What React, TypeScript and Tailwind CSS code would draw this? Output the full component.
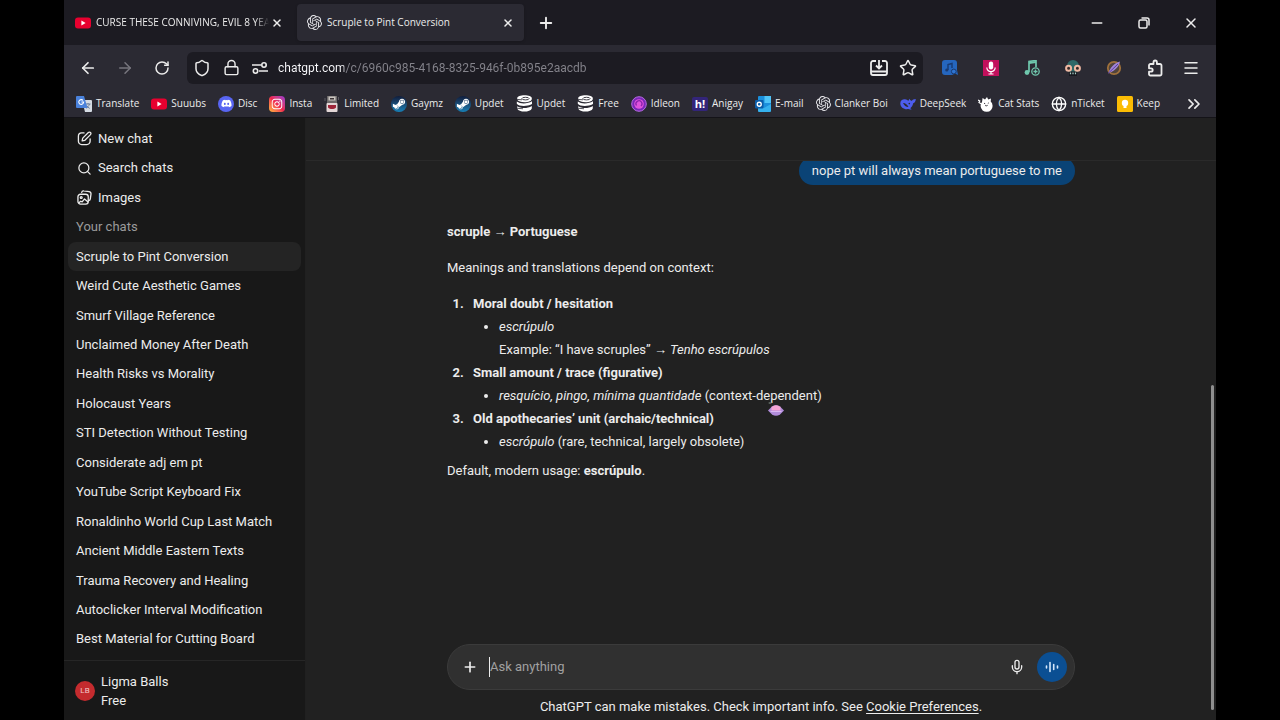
import React from 'react';
import { clsx } from 'clsx';
import {
  ArrowLeft,
  ArrowRight,
  ChevronsRight,
  Globe,
  Lock,
  Menu,
  Mic,
  Minus,
  Plus,
  RotateCw,
  Search,
  Shield,
  Star,
  X,
} from 'lucide-react';
import { FaDiscord, FaInstagram, FaSteamSymbol } from 'react-icons/fa';
import { SiOpenai } from 'react-icons/si';

const YoutubeIcon = () => (
  <svg viewBox="0 0 16 16" className="size-4 shrink-0">
    <rect x="0" y="2.5" width="16" height="11" rx="3" fill="#e8002f" />
    <path d="M6.4 5.6v4.8L10.6 8z" fill="#fff" />
  </svg>
);

const TranslateIcon = () => (
  <svg viewBox="0 0 16 16" className="size-4">
    <path d="M6 4h9a1 1 0 0 1 1 1v10a1 1 0 0 1-1 1H9z" fill="#d5dbe3" />
    <path d="M9.5 8h5M12 7v1M13.5 8c-.5 2-2 3.5-3.3 4.2M10.7 9.5c.6 1.3 1.7 2.3 3 2.9" stroke="#6a7f9c" fill="none" />
    <path d="M1 0h7l3.5 12H1a1 1 0 0 1-1-1V1a1 1 0 0 1 1-1z" fill="#4a82dc" />
    <path d="M7 4.4A2.4 2.4 0 1 0 7.6 6H5.4" stroke="#fff" strokeWidth="1.1" fill="none" />
  </svg>
);

const DiscordIcon = () => (
  <span className="flex size-4 items-center justify-center rounded-full bg-[#5865f2] text-white">
    <FaDiscord className="size-[11px]" />
  </span>
);

const InstagramIcon = () => (
  <span className="flex size-4 items-center justify-center rounded bg-linear-to-tr from-[#fdb53a] via-[#f0244f] to-[#9a2fd0] text-white">
    <FaInstagram className="size-3" />
  </span>
);

const LimitedIcon = () => (
  <svg viewBox="0 0 16 16" className="size-4">
    <rect x="3" y="0" width="10" height="8" fill="#6d6a6a" />
    <rect x="4.5" y="0.5" width="7" height="4" fill="#c9c4c0" />
    <rect x="6" y="2" width="4" height="1.5" fill="#3a3335" />
    <rect x="2.5" y="7" width="11" height="9" rx="1" fill="#e3d6d6" />
    <path d="M4 9h8v2.5c-2 2-6 2-8 0z" fill="#9d2438" />
    <path d="M1 2v3M14.5 1v3" stroke="#5b5960" />
  </svg>
);

const SteamIcon = () => (
  <span className="flex size-4 items-center justify-center rounded-full bg-linear-to-b from-[#101d3c] to-[#1681b8] text-white">
    <FaSteamSymbol className="size-3.5" />
  </span>
);

const SteamDbIcon = () => (
  <svg viewBox="0 0 17 17" className="size-[17px]">
    <path
      d="M8.5.3C4.5.3 1.2 1.5 1.2 3.2v1.6C2.2 6.5 5 7.2 8.5 7.2c3.9 0 7.3-1.2 7.3-3.2V3.2C15.8 1.5 12.5.3 8.5.3z"
      fill="#fff"
    />
    <path d="M.8 6.6v2.2c2 2.6 9.5 3.3 15.2.3V6.3C11.5 9 4.5 9.2.8 6.6z" fill="#fff" />
    <path d="M1.2 11.2v2.2c1.5 4.2 13 4.2 14.6 0v-2.5C11.5 13.6 5 13.7 1.2 11.2z" fill="#fff" />
    <ellipse cx="9.5" cy="3.6" rx="3.6" ry="1.3" fill="none" stroke="#2b2a33" strokeWidth=".9" />
    <path d="M1 4.4l5 .4M.8 13.2l6.2.6" stroke="#2b2a33" strokeWidth=".8" />
  </svg>
);

const IdleonIcon = () => (
  <svg viewBox="0 0 16 16" className="size-4">
    <circle cx="8" cy="8" r="7.3" fill="#7a27b8" stroke="#b56ae0" />
    <circle cx="8" cy="8" r="4.8" fill="#e052dd" />
    <path d="M5.5 9.5a3 3 0 1 1 4.5.5" stroke="#8a24ae" strokeWidth="1.3" fill="none" />
  </svg>
);

const AnigayIcon = () => (
  <span className="flex h-3.5 w-4 items-center justify-center rounded-xs bg-[#33257a] text-[11px] leading-3 font-bold text-white">
    h!
  </span>
);

const OutlookIcon = () => (
  <svg viewBox="0 0 16 16" className="size-4">
    <rect x="3" y="0" width="13" height="14" rx="1" fill="#1b8fdc" />
    <rect x="9.5" y="0" width="6.5" height="7" fill="#4fc4f7" />
    <path d="M3 9l6 3 7-4v7a1 1 0 0 1-1 1H4a1 1 0 0 1-1-1z" fill="#35b1ee" />
    <rect x="0" y="4" width="8.5" height="8.5" rx="1" fill="#0a5ca8" />
    <circle cx="4.25" cy="8.25" r="2" fill="none" stroke="#fff" strokeWidth="1.3" />
  </svg>
);

const DeepSeekIcon = () => (
  <svg viewBox="0 0 16 16" className="size-4">
    <path
      d="M.3 7.2C.3 4.6 2.5 3 5 3.2c1.5.1 2.3.9 3.2 1.6.8-.2.6-1.5 1.3-2.1.4 1.5 1.5 2 2.5 2 .4-1 1.8-1.5 3.8-1.7-.1 2.2-1 3.7-2.6 4.2-.4 2.3-1.5 4-3 5 .6.5 1 .7 1.5 1.1-1.5.5-2.6.2-3.5-.2C4 13.6.3 11.5.3 7.2z"
      fill="#4d5dec"
    />
    <path d="M3 7c2-.3 4.5 2 5.5 4-2 .2-4.5-1.5-5.5-4z" fill="#2b2a33" />
    <circle cx="9.3" cy="7.6" r=".8" fill="#2b2a33" />
  </svg>
);

const CatIcon = () => (
  <svg viewBox="0 0 16 16" className="size-4">
    <path d="M4 6L4.6 2 7 3.6 9 1l1.2 2.6L13 2.5l-.3 3A6 6 0 1 1 4 6z" fill="#fff" />
    <path d="M3.5 8L1 6.5 1.8 5 0 4" stroke="#fff" strokeWidth="1.2" fill="none" />
    <path d="M6 7.2l1.2.6M10.8 6.8l-1 .8M7 9.2c.8.9 2.2.8 2.8-.2" stroke="#2b2a33" strokeWidth=".9" fill="none" />
  </svg>
);

const GlobeIcon = () => <Globe className="size-4 text-white" strokeWidth={2} />;

const KeepIcon = () => (
  <svg viewBox="0 0 16 16" className="size-4">
    <rect width="16" height="16" rx="1.5" fill="#fbbc04" />
    <circle cx="8" cy="7" r="3.2" fill="#fff" />
    <path d="M6.5 9.5h3v2.5h-3z" fill="#fff" />
  </svg>
);

const OpenAiIcon = () => <SiOpenai className="size-[15px] shrink-0 text-[#e6e6ea]" />;

const bookmarks = [
  { label: 'Translate', Icon: TranslateIcon },
  { label: 'Suuubs', Icon: YoutubeIcon },
  { label: 'Disc', Icon: DiscordIcon },
  { label: 'Insta', Icon: InstagramIcon },
  { label: 'Limited', Icon: LimitedIcon },
  { label: 'Gaymz', Icon: SteamIcon },
  { label: 'Updet', Icon: SteamIcon },
  { label: 'Updet', Icon: SteamDbIcon },
  { label: 'Free', Icon: SteamDbIcon },
  { label: 'Idleon', Icon: IdleonIcon },
  { label: 'Anigay', Icon: AnigayIcon },
  { label: 'E-mail', Icon: OutlookIcon },
  { label: 'Clanker Boi', Icon: OpenAiIcon },
  { label: 'DeepSeek', Icon: DeepSeekIcon },
  { label: 'Cat Stats', Icon: CatIcon },
  { label: 'nTicket', Icon: GlobeIcon },
  { label: 'Keep', Icon: KeepIcon },
];

const chats = [
  'Scruple to Pint Conversion',
  'Weird Cute Aesthetic Games',
  'Smurf Village Reference',
  'Unclaimed Money After Death',
  'Health Risks vs Morality',
  'Holocaust Years',
  'STI Detection Without Testing',
  'Considerate adj em pt',
  'YouTube Script Keyboard Fix',
  'Ronaldinho World Cup Last Match',
  'Ancient Middle Eastern Texts',
  'Trauma Recovery and Healing',
  'Autoclicker Interval Modification',
  'Best Material for Cutting Board',
];

interface IconButtonProps {
  label: string;
  className?: string;
  children: React.ReactNode;
}

const IconButton: React.FC<IconButtonProps> = ({ label, className, children }) => (
  <button aria-label={label} className={clsx('flex shrink-0 items-center justify-center', className)}>
    {children}
  </button>
);

const TabBar = () => (
  <div className="flex h-[45px] shrink-0 items-center bg-[#1c1b22] font-['Open_Sans','Noto_Sans',sans-serif] text-[10px] font-medium">
    <div className="flex h-[37px] w-[233px] items-center pr-3 pl-[11px]">
      <YoutubeIcon />
      <span className="ml-[5px] flex-1 overflow-hidden whitespace-nowrap [mask-image:linear-gradient(to_right,#000_92%,transparent)]">
        CURSE THESE CONNIVING, EVIL 8 YEA
      </span>
      <IconButton label="Close tab" className="size-4">
        <X className="size-3" strokeWidth={3} />
      </IconButton>
    </div>
    <div className="flex h-[37px] w-[227px] items-center rounded-sm bg-[#2b2a33] pr-2 pl-[10px] shadow-sm">
      <OpenAiIcon />
      <span className="ml-[5px] flex-1 overflow-hidden whitespace-nowrap">Scruple to Pint Conversion</span>
      <IconButton label="Close tab" className="size-4">
        <X className="size-3" strokeWidth={3} />
      </IconButton>
    </div>
    <IconButton label="New tab" className="ml-3 size-5">
      <Plus className="size-[18px]" strokeWidth={2.5} />
    </IconButton>
    <div className="ml-auto flex pr-0.5">
      <IconButton label="Minimize" className="w-[47px]">
        <Minus className="size-4" strokeWidth={2.5} />
      </IconButton>
      <IconButton label="Restore" className="w-[47px]">
        <svg viewBox="0 0 12 12" className="size-3" fill="none" stroke="currentColor" strokeWidth="1.5">
          <rect x="1" y="3" width="8" height="8" rx="1.5" />
          <path d="M3.5 1H9a2 2 0 0 1 2 2v5.5" />
        </svg>
      </IconButton>
      <IconButton label="Close window" className="w-[47px]">
        <X className="size-4" strokeWidth={2.25} />
      </IconButton>
    </div>
  </div>
);

const Extensions = () => (
  <div className="flex items-center">
    <IconButton label="Music search" className="w-[41px]">
      <svg viewBox="0 0 16 16" className="size-4">
        <path d="M3 0h9a3 3 0 0 1 3 3v7l1 5-3-1.5L10 15H3a3 3 0 0 1-3-3V3a3 3 0 0 1 3-3z" fill="#2566be" />
        <path d="M6 10V4.5l4-1V8" stroke="#183a72" strokeWidth="1.4" fill="none" />
        <circle cx="4.8" cy="10" r="1.6" fill="#183a72" />
        <circle cx="11.8" cy="11.5" r="2.4" fill="#2f74d0" stroke="#183a72" />
      </svg>
    </IconButton>
    <IconButton label="Voice recorder" className="w-[41px]">
      <svg viewBox="0 0 16 16" className="size-4">
        <rect width="16" height="16" fill="#c2105c" />
        <rect x="5.8" y="1.5" width="4.4" height="8" rx="2.2" fill="#fff" />
        <path d="M3.8 7.5a4.2 4.2 0 0 0 8.4 0M8 11.7v2.3M5.5 14h5" stroke="#fff" strokeWidth="1.2" fill="none" />
      </svg>
    </IconButton>
    <IconButton label="Add music" className="w-[41px]">
      <svg viewBox="0 0 16 16" className="size-4" fill="none" stroke="#6fc7ad">
        <path d="M5 12V1.5l7-1V7" strokeWidth="1.7" />
        <path d="M5 3l7-1" strokeWidth="2" />
        <circle cx="3" cy="12.5" r="2.4" fill="#6fc7ad" stroke="none" />
        <circle cx="11.5" cy="11.5" r="3.7" strokeWidth="1.3" />
        <path d="M11.5 9.5v4M9.5 11.5h4" strokeWidth="1.3" />
      </svg>
    </IconButton>
    <IconButton label="Skull" className="w-[41px]">
      <svg viewBox="0 0 16 16" className="size-4">
        <path d="M2 6a6 6 0 0 1 12 0v4l-2 2v4H4v-4l-2-2z" fill="#2f6968" />
        <path d="M4 11.5h8V16H4z" fill="#17191f" />
        <path d="M5.5 12.5v1.8M8 12.5v1.8M10.5 12.5v1.8" stroke="#a8d0c8" strokeWidth="1.2" />
        <circle cx="3.6" cy="8.2" r="2.5" fill="#342827" stroke="#f0b8a2" strokeWidth="2" />
        <circle cx="12.4" cy="8.2" r="2.5" fill="#342827" stroke="#f0b8a2" strokeWidth="2" />
      </svg>
    </IconButton>
    <IconButton label="Feather" className="w-[41px]">
      <svg viewBox="0 0 16 16" className="size-4">
        <circle cx="8" cy="8" r="6.2" fill="#51443b" stroke="#a0713b" strokeWidth="1.8" />
        <path d="M2.5 13C4 7.5 8 3.5 14 1.5c-1 5.5-5.5 9.5-11.5 11.5z" fill="#a184d8" />
        <path d="M2 13.5L12 4" stroke="#5b3f95" />
      </svg>
    </IconButton>
    <IconButton label="Extensions" className="w-[41px]">
      <svg viewBox="0 0 18 18" className="size-[18px]" fill="none" stroke="currentColor" strokeWidth="1.8" strokeLinejoin="round">
        <path d="M3 6.5A1.5 1.5 0 0 1 4.5 5H7.5V3.2a1.7 1.7 0 0 1 3.4 0V5h3.1A1.5 1.5 0 0 1 15.5 6.5v8.5A1.5 1.5 0 0 1 14 16.5H4.5A1.5 1.5 0 0 1 3 15v-2.3h2a1.7 1.7 0 0 0 0-3.4H3z" />
      </svg>
    </IconButton>
    <IconButton label="Open application menu" className="w-8">
      <Menu className="size-[18px]" />
    </IconButton>
  </div>
);

const Toolbar = () => (
  <div className="flex h-[45px] shrink-0 items-center bg-[#2b2a33] pr-[9px] pl-[5px]">
    <IconButton label="Back" className="w-[37px]">
      <ArrowLeft className="size-[18px]" strokeWidth={2.25} />
    </IconButton>
    <IconButton label="Forward" className="w-[37px] text-[#77767e]">
      <ArrowRight className="size-[18px]" />
    </IconButton>
    <IconButton label="Reload" className="w-[37px]">
      <RotateCw className="size-4" strokeWidth={2.25} />
    </IconButton>
    <div className="ml-[7px] flex h-8 flex-1 items-center rounded-md bg-[#1c1b22] px-[6px]">
      <Shield className="size-[18px]" />
      <Lock className="ml-3 size-[17px]" />
      <svg viewBox="0 0 16 12" className="ml-3 h-3 w-4" fill="none" stroke="currentColor" strokeWidth="1.6">
        <path d="M0 3h9M7 9h9" />
        <circle cx="12" cy="3" r="2.2" />
        <circle cx="3.5" cy="9" r="2.2" />
      </svg>
      <input
        aria-label="Address"
        defaultValue="chatgpt.com/c/6960c985-4168-8325-946f-0b895e2aacdb"
        className="ml-[10px] min-w-0 flex-1 bg-[linear-gradient(to_right,#fbfbfe_66px,#85848c_66px)] bg-clip-text text-xs text-transparent outline-none"
      />
      <IconButton label="Save page">
        <svg viewBox="0 0 18 16" className="h-4 w-[18px]" fill="none" stroke="currentColor" strokeWidth="1.8">
          <path d="M6 1H3a2 2 0 0 0-2 2v10a2 2 0 0 0 2 2h12a2 2 0 0 0 2-2V3a2 2 0 0 0-2-2h-3" />
          <path d="M1 11.5h16M9 0v8M6 5.5l3 3 3-3" />
        </svg>
      </IconButton>
      <IconButton label="Bookmark this page" className="ml-[11px]">
        <Star className="size-[18px]" />
      </IconButton>
    </div>
    <div className="ml-[6px]">
      <Extensions />
    </div>
  </div>
);

const BookmarksBar = () => (
  <div className="flex h-7 shrink-0 items-center border-b border-[#141318] bg-[#2b2a33] px-3">
    <nav className="flex min-w-0 flex-1 items-center gap-3 overflow-hidden font-['Open_Sans','Noto_Sans',sans-serif] text-[10px] font-medium">
      {bookmarks.map(({ label, Icon }, i) => (
        <a key={i} href="#" className="flex shrink-0 items-center gap-1 whitespace-nowrap">
          <Icon />
          {label}
        </a>
      ))}
    </nav>
    <IconButton label="Show more bookmarks">
      <ChevronsRight className="size-5" />
    </IconButton>
  </div>
);

const NewChatIcon = () => (
  <svg viewBox="0 0 16 16" className="size-[15px]" fill="none" stroke="currentColor" strokeWidth="1.4" strokeLinecap="round" strokeLinejoin="round">
    <path d="M7.5 2H5a3.5 3.5 0 0 0-3.5 3.5v5.5A3.5 3.5 0 0 0 5 14.5h5.5A3.5 3.5 0 0 0 14 11V8.5" />
    <path d="M5.5 10.5l.6-2.9 6-6a1.6 1.6 0 0 1 2.3 2.3l-6 6z" />
  </svg>
);

const ImagesIcon = () => (
  <svg viewBox="0 0 16 16" className="size-[15px]" fill="none" stroke="currentColor" strokeWidth="1.4" strokeLinecap="round" strokeLinejoin="round">
    <path d="M5 2.5C5.3 1.3 6.2.8 7.3 1l5.5.8c1.5.2 2.3 1.2 2.1 2.6l-.7 5c-.1 1-.8 1.7-1.7 1.9" />
    <rect x="1" y="4.5" width="11" height="10.5" rx="2.8" />
    <circle cx="4.5" cy="8" r="1" />
    <path d="M2 13.5l2-1.5 1.5.6L8 9.5l3.5 3" />
  </svg>
);

const Sidebar = () => (
  <aside className="flex w-[242px] shrink-0 flex-col border-r border-[#202020] bg-[#181818]">
    <nav className="flex min-h-0 flex-1 flex-col px-1 py-1.5">
      <a href="#" className="flex flex-1 items-center gap-[6px] px-[9px]">
        <NewChatIcon />
        New chat
      </a>
      <a href="#" className="flex flex-1 items-center gap-[6px] px-[9px]">
        <Search className="size-[15px]" />
        Search chats
      </a>
      <a href="#" className="flex flex-1 items-center gap-[6px] px-[9px]">
        <ImagesIcon />
        Images
      </a>
      <h2 className="flex flex-1 items-center px-2 text-[#9b9b9b]">Your chats</h2>
      {chats.map((chat, i) => (
        <a key={chat} href="#" className={clsx('flex flex-1 items-center rounded-lg px-2', i === 0 && 'bg-[#242424]')}>
          {chat}
        </a>
      ))}
    </nav>
    {/* Account */}
    <button className="flex h-[60px] shrink-0 items-center gap-[6px] border-t border-[#262626] px-[11px] text-left">
      <span className="flex size-5 items-center justify-center rounded-full bg-[#c42b2e] text-[8px] text-[#f3c9c9]">LB</span>
      <span className="leading-[19px]">
        <span className="block">Ligma Balls</span>
        <span className="block">Free</span>
      </span>
    </button>
  </aside>
);

const Answer = () => (
  <article className="mt-[35px] leading-[23px]">
    <p className="font-bold">scruple → Portuguese</p>
    <p className="mt-[13px]">Meanings and translations depend on context:</p>
    <ol className="mt-[13px] list-decimal pl-5 marker:font-bold">
      <li className="pl-[6px]">
        <strong>Moral doubt / hesitation</strong>
        <ul className="list-disc pl-[26px]">
          <li>
            <em>escrúpulo</em>
            <br />
            Example: “I have scruples” → <em>Tenho escrúpulos</em>
          </li>
        </ul>
      </li>
      <li className="pl-[6px]">
        <strong>Small amount / trace (figurative)</strong>
        <ul className="list-disc pl-[26px]">
          <li>
            <em>resquício, pingo, mínima quantidade</em> (context-dependent)
          </li>
        </ul>
      </li>
      <li className="pl-[6px]">
        <strong>Old apothecaries’ unit (archaic/technical)</strong>
        <ul className="list-disc pl-[26px]">
          <li>
            <em>escrópulo</em> (rare, technical, largely obsolete)
          </li>
        </ul>
      </li>
    </ol>
    <p className="mt-[6px]">
      Default, modern usage: <strong>escrúpulo</strong>.
    </p>
  </article>
);

const Composer = () => (
  <form className="mx-auto flex h-[46px] w-full max-w-[628px] items-center rounded-full border border-[#3b3b3b] bg-[#303030] pr-[7px] pl-[13px]">
    <IconButton label="Add files" className="size-[18px]">
      <Plus className="size-4" strokeWidth={2.5} />
    </IconButton>
    <div className="ml-[10px] flex min-w-0 flex-1 items-center border-l border-[#ececec]">
      <input
        aria-label="Message"
        placeholder="Ask anything"
        className="min-w-0 flex-1 bg-transparent placeholder-[#a0a0a0] caret-white outline-none"
      />
    </div>
    <IconButton label="Dictate" className="size-4">
      <Mic className="size-4" />
    </IconButton>
    <IconButton label="Voice mode" className="ml-3 size-[30px] rounded-full bg-[#0b4f93]">
      <svg viewBox="0 0 14 14" className="size-3.5" stroke="#d5e6fa" strokeWidth="1.6" strokeLinecap="round">
        <path d="M1.5 6v2M5 2.5v9M8.7 4.5v5M12.5 6v2" />
      </svg>
    </IconButton>
  </form>
);

const Conversation = () => (
  <main className="relative flex min-w-0 flex-1 flex-col bg-[#212121]">
    <header className="h-[43px] shrink-0 border-b border-[#2a2a2a]" />
    <div className="min-h-0 flex-1 overflow-hidden">
      <div className="mx-auto w-full max-w-[628px]">
        <div className="-mt-1 ml-auto w-fit rounded-full bg-[#0a4376] px-[13px] leading-7">
          nope pt will always mean portuguese to me
        </div>
        <Answer />
      </div>
    </div>
    <Composer />
    <p className="shrink-0 pt-2 pb-1 text-center leading-[18px]">
      ChatGPT can make mistakes. Check important info. See{' '}
      <a href="#" className="underline underline-offset-2">
        Cookie Preferences
      </a>
      .
    </p>
    {/* Scrollbar thumb */}
    <div className="absolute right-[2px] bottom-[10px] h-[54%] w-[3px] rounded-full bg-[#8f8f8f]" />
    {/* Mouse pointer */}
    <svg viewBox="0 0 18 16" className="absolute top-[284px] left-[461px] h-4 w-[18px]">
      <path d="M1.5 1h3M3 0v2" stroke="#66716a" />
      <path d="M1 8.5L5 4.5q4-2.5 8 0l4 4-4 4q-4 2.5-8 0z" fill="#b18cda" />
      <path d="M4.5 8.5V5q4.5-3.5 9 0v3.5z" fill="#f5a3d4" />
      <path d="M3.5 9.5h11" stroke="#d9b8f2" />
    </svg>
  </main>
);

export default function App() {
  return (
    <div className="h-screen bg-black px-16 font-['Roboto','Noto_Sans',sans-serif] text-[13px] text-[#ececec]">
      <div className="flex h-full flex-col overflow-hidden">
        <TabBar />
        <Toolbar />
        <BookmarksBar />
        <div className="flex min-h-0 flex-1">
          <Sidebar />
          <Conversation />
        </div>
      </div>
    </div>
  );
}
